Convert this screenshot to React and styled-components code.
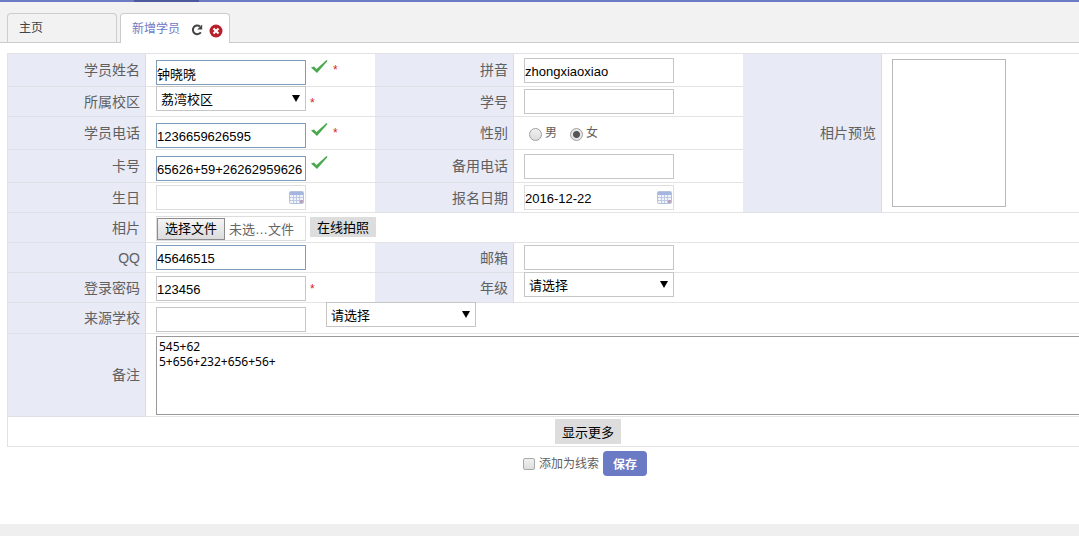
import React, { useState } from 'react';
import styled, { createGlobalStyle } from 'styled-components';

const GlobalStyle = createGlobalStyle`
  * {
    box-sizing: border-box;
  }

  body {
    margin: 0;
    background-color: #fff;
    color: #606060;
    font-family: "Liberation Sans", "Noto Sans CJK SC", sans-serif;
    font-size: 14px;
    overflow: hidden;
  }
`;

const Page = styled.div`
  min-height: 100vh;
  display: flex;
  flex-direction: column;
  overflow: hidden;
`;

const TopBar = styled.div`
  height: 2px;
  padding-left: 134px;
  background-color: #6d7bc4;
`;

const TopBarActive = styled.div`
  width: 65px;
  height: 2px;
  background-color: #4e589c;
`;

const Tabs = styled.nav`
  display: flex;
  align-items: flex-end;
  gap: 3px;
  height: 41px;
  padding-left: 7px;
  background-color: #f2f2f2;
  border-bottom: 1px solid #ccc;
`;

const Tab = styled.div`
  display: flex;
  align-items: center;
  width: 110px;
  height: ${props => (props.$active ? '30px' : '29px')};
  margin-bottom: ${props => (props.$active ? '-1px' : '0')};
  padding-left: 11px;
  border: 1px solid #ccc;
  border-bottom: none;
  border-radius: 4px 4px 0 0;
  background-color: ${props => (props.$active ? '#fff' : '#f2f2f2')};
`;

const TabLink = styled.a`
  color: ${props => (props.$active ? '#6d7bc4' : '#444')};
  font-size: 12px;
  line-height: 28px;
  text-decoration: none;
`;

const IconButton = styled.button`
  display: flex;
  margin-left: ${props => props.$gap}px;
  padding: ${props => props.$top}px 0 0;
  border: none;
  background: none;
  cursor: pointer;
`;

const Form = styled.form`
  flex: 1;
  margin: 10px -90px 0 7px;
`;

const Grid = styled.div`
  display: grid;
  grid-template-columns: 138px 229px 139px 229px 139px 1fr;
  border: 1px solid #e2e2e6;
  border-bottom: none;
`;

const Label = styled.label`
  display: flex;
  align-items: center;
  justify-content: flex-end;
  grid-row: span ${props => props.$rows || 1};
  padding-right: 5px;
  border-right: 1px solid #dcdce4;
  border-bottom: 1px solid #dfdfe6;
  background-color: #e8eaf6;
  line-height: 20px;
`;

const Cell = styled.div`
  display: flex;
  align-items: ${props => props.$align || 'center'};
  grid-column: span ${props => props.$cols || 1};
  grid-row: span ${props => props.$rows || 1};
  min-height: ${props => (props.$tall ? '33px' : '30px')};
  padding: 0 0 ${props => (props.$align === 'flex-end' ? '1px' : '0')} 10px;
  border-bottom: 1px solid #e4e4e4;
`;

const SchoolCell = styled(Cell)`
  min-height: 31px;
`;

const RemarkCell = styled(Cell)`
  padding: 2px 0 1px 10px;
`;

const Input = styled.input`
  width: 150px;
  height: 25px;
  padding: 2px 0 0;
  border: 1px solid ${props => (props.$valid ? '#7f9db9' : '#c6c6c6')};
  background-color: #fff;
  color: #000;
  font-family: "Liberation Sans", "Noto Sans CJK SC", sans-serif;
  font-size: 13px;
  outline: none;
`;

const SelectBox = styled.span`
  position: relative;
  display: flex;
  align-self: flex-start;
  width: 150px;
  margin-top: -1px;
  margin-left: ${props => props.$gap || 0}px;

  &::after {
    content: '';
    position: absolute;
    top: 9px;
    right: 6px;
    border: 4px solid transparent;
    border-top: 7px solid #000;
    border-bottom: none;
    pointer-events: none;
  }
`;

const Select = styled.select`
  width: 100%;
  height: 25px;
  padding: 0 4px;
  appearance: none;
  border: 1px solid #c6c6c6;
  border-radius: 0;
  background-color: #fff;
  color: #000;
  font-family: "Noto Sans CJK SC", sans-serif;
  font-size: 13px;
`;

const DateBox = styled.span`
  position: relative;
  display: flex;

  input {
    border-color: #ddd;
  }

  svg {
    position: absolute;
    top: 6px;
    right: 2px;
  }
`;

const Marks = styled.span`
  display: flex;
  align-self: flex-start;
  align-items: center;
  gap: 5px;
  height: 26px;
  margin-left: 4px;
`;

const Star = styled.span`
  padding-top: 6px;
  color: #d81e1e;
  font-size: 12px;
  line-height: 16px;
`;

const Radio = styled.input`
  width: 13px;
  height: 13px;
  margin: 2px 3px 0 ${props => props.$gap}px;
  appearance: none;
  border: 1px solid #a0a0a0;
  border-radius: 50%;
  background: linear-gradient(#f0f0f0, #dcdcdc);

  &:checked {
    background: radial-gradient(circle, #555 0 3px, #e6e6e6 4px);
  }
`;

const SmallLabel = styled.label`
  color: #606060;
  font-size: 12px;
  line-height: 18px;
`;

const FileBox = styled.label`
  position: relative;
  display: flex;
  align-items: center;
  gap: 4px;
  width: 150px;
  height: 25px;
  border: 1px solid #ddd;
  color: #666;
  font-size: 13px;
  white-space: nowrap;

  input {
    position: absolute;
    inset: 0;
    width: 100%;
    opacity: 0;
  }
`;

const FileButton = styled.span`
  height: 22px;
  padding: 0 7px;
  border: 1px solid #8c8c8c;
  background: linear-gradient(#f4f4f4, #dcdcdc);
  color: #000;
  line-height: 20px;
`;

const GreyButton = styled.button`
  align-self: center;
  height: ${props => props.$height}px;
  margin-left: ${props => props.$gap || 0}px;
  padding: 0 7px;
  border: none;
  background-color: #ddd;
  color: #000;
  font-family: "Noto Sans CJK SC", sans-serif;
  font-size: 13px;
  line-height: 20px;
`;

const TextArea = styled.textarea`
  flex: 1;
  height: 79px;
  padding: 2px;
  border: 1px solid #999;
  color: #000;
  font-family: "Noto Sans", "Noto Sans CJK SC", sans-serif;
  font-size: 12px;
  line-height: 15px;
  resize: none;
`;

const Photo = styled.div`
  width: 114px;
  height: 148px;
  border: 1px solid #b8b8b8;
`;

const MoreRow = styled.div`
  display: flex;
  align-items: center;
  justify-content: center;
  grid-column: 1 / -1;
  height: 30px;
  border-bottom: 1px solid #e4e4e4;
`;

const Actions = styled.div`
  display: flex;
  align-items: center;
  justify-content: center;
  padding: 4px 6px 0 0;
`;

const Checkbox = styled.input`
  width: 12px;
  height: 12px;
  margin: 0 4px 0 0;
  appearance: none;
  border: 1px solid #a8a8a8;
  border-radius: 2px;
  background: linear-gradient(#f0f0f0, #dedede);
`;

const SaveButton = styled.button`
  width: 44px;
  height: 25px;
  margin-left: 4px;
  padding: 0;
  border: none;
  border-radius: 4px;
  background-color: #6a7ac4;
  color: #fff;
  font-family: "Noto Sans CJK SC", sans-serif;
  font-size: 12px;
  font-weight: 700;
`;

const Footer = styled.footer`
  height: 12px;
  background-color: #efefef;
`;

const CheckIcon = () => (
  <svg width="18" height="16" viewBox="0 0 18 16" aria-hidden="true">
    <path d="M1 8.5 4 7.5 6.5 10 16.5 1 17.5 2 7 14Z" fill="#4aa84e" />
  </svg>
);

const CalendarIcon = () => (
  <svg width="15" height="13" viewBox="0 0 15 13" aria-hidden="true">
    <rect x="0.5" y="0.5" width="14" height="12" rx="1" fill="#f1f3fa" stroke="#b4c0de" />
    <path d="M1 1h13v3H1z" fill="#a4b5e0" />
    <path d="M1 6.5h13M1 9.5h13M4.5 4v8M7.5 4v8M10.5 4v8" stroke="#bdc8e2" />
    <path d="M11 9h3v3h-3z" fill="#b7a3bd" />
  </svg>
);

const RefreshIcon = () => (
  <svg width="12" height="12" viewBox="0 0 12 12" aria-hidden="true">
    <path d="M9 2.6A4.3 4.3 0 1 0 9.8 8.2" fill="none" stroke="#444" strokeWidth="2" />
    <path d="M11.2 0.5V5.5H6.2Z" fill="#444" />
  </svg>
);

const CloseIcon = () => (
  <svg width="14" height="14" viewBox="0 0 14 14" aria-hidden="true">
    <circle cx="7" cy="7" r="6.5" fill="#b9202c" />
    <path d="M4.5 4.5l5 5M9.5 4.5l-5 5" stroke="#fff" strokeWidth="2" />
  </svg>
);

const Dropdown = ({ id, gap, options, label }) => (
  <SelectBox $gap={gap}>
    <Select id={id} aria-label={label}>
      {options.map(option => <option key={option}>{option}</option>)}
    </Select>
  </SelectBox>
);

const DateField = ({ id, value }) => (
  <DateBox>
    <Input id={id} defaultValue={value} />
    <CalendarIcon />
  </DateBox>
);

const App = () => {
  const [gender, setGender] = useState('female');

  return (
    <Page>
      <GlobalStyle />
      <TopBar><TopBarActive /></TopBar>
      <Tabs>
        <Tab><TabLink href="#home">主页</TabLink></Tab>
        <Tab $active>
          <TabLink href="#new" $active>新增学员</TabLink>
          <IconButton type="button" aria-label="刷新" $gap={11} $top={2}><RefreshIcon /></IconButton>
          <IconButton type="button" aria-label="关闭" $gap={6} $top={4}><CloseIcon /></IconButton>
        </Tab>
      </Tabs>

      <Form onSubmit={e => e.preventDefault()}>
        <Grid>
          <Label htmlFor="name">学员姓名</Label>
          <Cell $tall $align="flex-end">
            <Input id="name" defaultValue="钟晓晓" $valid />
            <Marks><CheckIcon /><Star>*</Star></Marks>
          </Cell>
          <Label htmlFor="pinyin">拼音</Label>
          <Cell $tall><Input id="pinyin" defaultValue="zhongxiaoxiao" /></Cell>
          <Label as="div" $rows={5}>相片预览</Label>
          <Cell $rows={5}><Photo /></Cell>

          <Label htmlFor="campus">所属校区</Label>
          <Cell $align="flex-start">
            <Dropdown id="campus" options={['荔湾校区']} />
            <Marks><Star>*</Star></Marks>
          </Cell>
          <Label htmlFor="number">学号</Label>
          <Cell><Input id="number" /></Cell>

          <Label htmlFor="phone">学员电话</Label>
          <Cell $tall $align="flex-end">
            <Input id="phone" defaultValue="1236659626595" $valid />
            <Marks><CheckIcon /><Star>*</Star></Marks>
          </Cell>
          <Label as="div">性别</Label>
          <Cell $tall>
            <Radio type="radio" name="gender" id="male" $gap={5} checked={gender === 'male'} onChange={() => setGender('male')} />
            <SmallLabel htmlFor="male">男</SmallLabel>
            <Radio type="radio" name="gender" id="female" $gap={13} checked={gender === 'female'} onChange={() => setGender('female')} />
            <SmallLabel htmlFor="female">女</SmallLabel>
          </Cell>

          <Label htmlFor="card">卡号</Label>
          <Cell $tall $align="flex-end">
            <Input id="card" defaultValue="65626+59+26262959626" $valid />
            <Marks><CheckIcon /></Marks>
          </Cell>
          <Label htmlFor="backup">备用电话</Label>
          <Cell $tall><Input id="backup" /></Cell>

          <Label htmlFor="birthday">生日</Label>
          <Cell><DateField id="birthday" /></Cell>
          <Label htmlFor="signup">报名日期</Label>
          <Cell><DateField id="signup" value="2016-12-22" /></Cell>

          <Label htmlFor="photo">相片</Label>
          <Cell $cols={5} $align="flex-end">
            <FileBox>
              <FileButton>选择文件</FileButton>
              未选…文件
              <input id="photo" type="file" />
            </FileBox>
            <GreyButton type="button" $height={20} $gap={4}>在线拍照</GreyButton>
          </Cell>

          <Label htmlFor="qq">QQ</Label>
          <Cell><Input id="qq" defaultValue="45646515" $valid /></Cell>
          <Label htmlFor="email">邮箱</Label>
          <Cell $cols={3}><Input id="email" /></Cell>

          <Label htmlFor="password">登录密码</Label>
          <Cell $align="flex-end">
            <Input id="password" defaultValue="123456" />
            <Marks><Star>*</Star></Marks>
          </Cell>
          <Label htmlFor="grade">年级</Label>
          <Cell $cols={3} $align="flex-start">
            <Dropdown id="grade" options={['请选择']} />
          </Cell>

          <Label htmlFor="school">来源学校</Label>
          <SchoolCell $cols={5} $align="flex-end">
            <Input id="school" />
            <Dropdown gap={20} label="来源学校" options={['请选择']} />
          </SchoolCell>

          <Label htmlFor="remark">备注</Label>
          <RemarkCell $cols={5}>
            <TextArea id="remark" defaultValue={'545+62\n5+656+232+656+56+'} />
          </RemarkCell>

          <MoreRow><GreyButton type="button" $height={25}>显示更多</GreyButton></MoreRow>
        </Grid>

        <Actions>
          <Checkbox type="checkbox" id="lead" />
          <SmallLabel htmlFor="lead">添加为线索</SmallLabel>
          <SaveButton type="submit">保存</SaveButton>
        </Actions>
      </Form>
      <Footer />
    </Page>
  );
};

export default App;
